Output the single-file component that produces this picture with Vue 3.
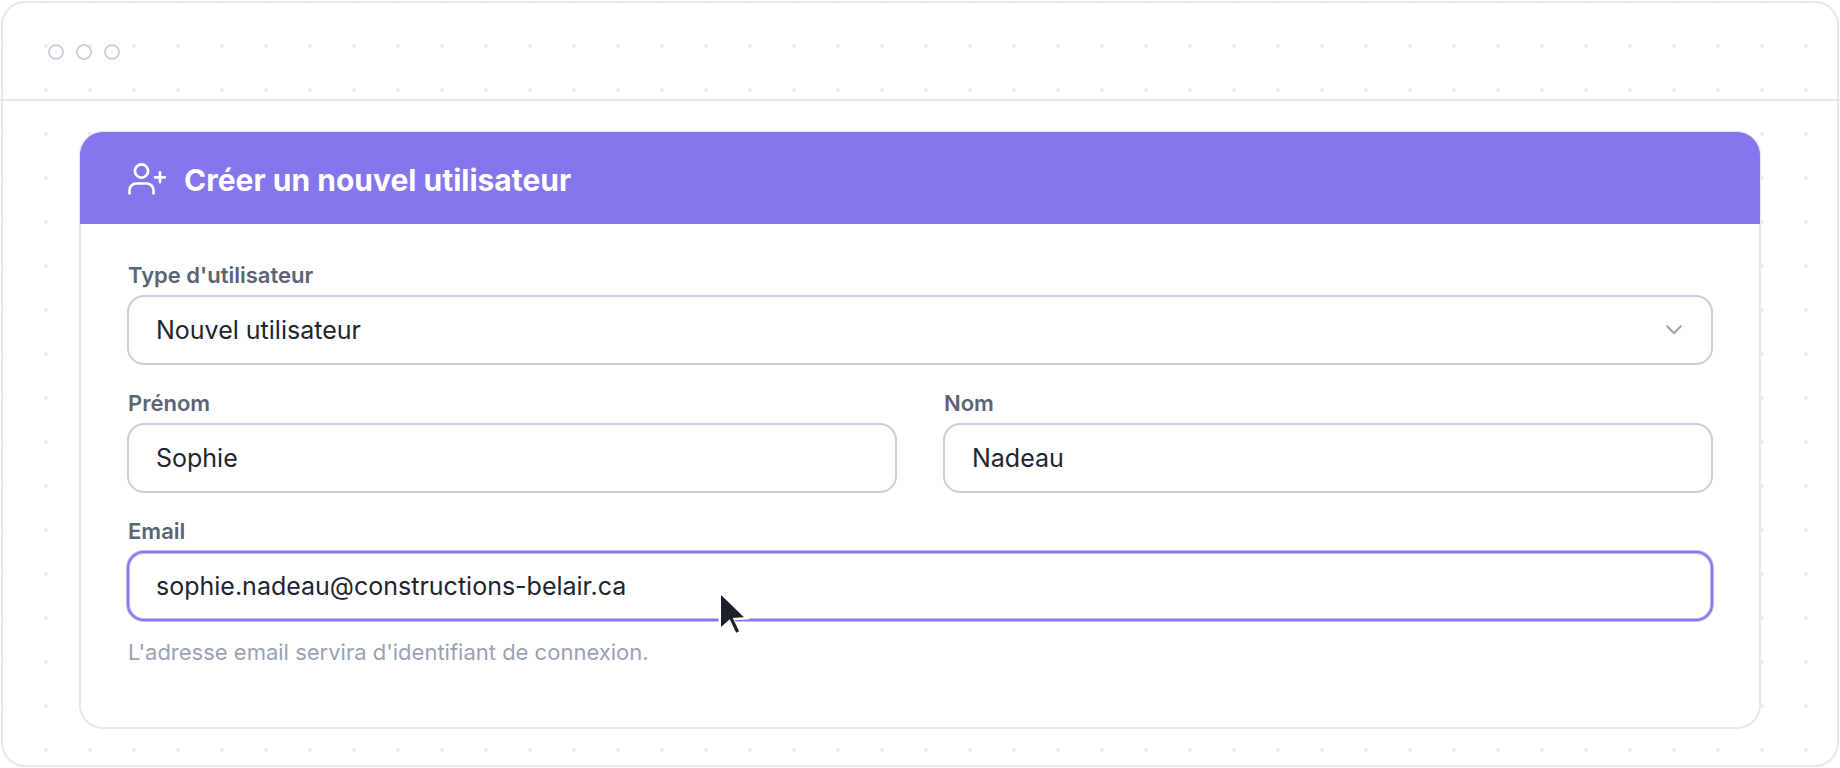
<script setup>
import { ref } from 'vue'

const userType = ref('new')
const firstName = ref('Sophie')
const lastName = ref('Nadeau')
const email = ref('sophie.nadeau@constructions-belair.ca')
</script>

<template>
  <main class="window">
    <header class="titlebar">
      <span class="dot"></span>
      <span class="dot"></span>
      <span class="dot"></span>
    </header>

    <div class="content">
      <section class="card">
        <div class="card-header">
          <svg class="user-icon" viewBox="0 0 40 36" fill="none" aria-hidden="true">
            <circle cx="13.5" cy="11" r="6.6" />
            <path d="M1.5 33.3V30.2a6.7 6.7 0 0 1 6.7-6.7h10.6a6.7 6.7 0 0 1 6.7 6.7v3.1" />
            <path d="M32 12.4v9.8M27.1 17.3h9.8" />
          </svg>
          <h1 class="title">Créer un nouvel utilisateur</h1>
        </div>

        <form class="form" @submit.prevent>
          <div class="field">
            <label class="label" for="user-type">Type d'utilisateur</label>
            <div class="control">
              <select id="user-type" v-model="userType" class="input">
                <option value="new">Nouvel utilisateur</option>
              </select>
              <svg class="chevron" viewBox="0 0 16 10" fill="none" aria-hidden="true">
                <path d="M1.2 1.3 8 8.2l6.8-6.9" />
              </svg>
            </div>
          </div>

          <div class="row">
            <div class="field">
              <label class="label" for="first-name">Prénom</label>
              <input id="first-name" v-model="firstName" class="input" type="text" />
            </div>
            <div class="field">
              <label class="label" for="last-name">Nom</label>
              <input id="last-name" v-model="lastName" class="input" type="text" />
            </div>
          </div>

          <div class="field">
            <label class="label" for="email">Email</label>
            <div class="control">
              <input
                id="email"
                v-model="email"
                class="input input-active"
                type="email"
                aria-describedby="email-hint"
              />
              <svg class="cursor" viewBox="0 0 36 48" aria-hidden="true">
                <g class="cursor-halo">
                  <path d="M4 4v32l9.5-9L27 26.2z" />
                  <path d="M12.6 25.5 21.3 41.5" />
                </g>
                <path class="cursor-tail" d="M13 25 20.6 41" />
                <path class="cursor-head" d="M4 4v32l10.2-9L27 26.2z" />
              </svg>
            </div>
            <p id="email-hint" class="hint">L'adresse email servira d'identifiant de connexion.</p>
          </div>
        </form>
      </section>
    </div>
  </main>
</template>

<style>
body {
  background: #ffffff;
}
</style>

<style scoped>
.window {
  margin: 1px;
  border: 2px solid #e4e8f0;
  border-radius: 24px;
  background: #ffffff radial-gradient(circle at 22px 22px, #ebebf4 1.6px, transparent 2.2px) -23px -23px / 44px 44px;
  background-clip: padding-box;
  font-family: "Inter", "Liberation Sans", sans-serif;
}

.titlebar {
  display: flex;
  gap: 12px;
  margin: 0 -3px;
  padding: 41px 48px 39px;
  border-bottom: 2px solid #e4e8f0;
}

.dot {
  box-sizing: border-box;
  width: 16px;
  height: 16px;
  border: 2px solid #cbd2e0;
  border-radius: 50%;
  background: #ffffff;
}

.content {
  padding: 30px 76px 36px;
}

.card {
  border: 2px solid #e4e8f0;
  border-radius: 24px;
  background: #ffffff;
}

.card-header {
  display: flex;
  align-items: center;
  gap: 16px;
  margin: -1px -1px 0;
  padding: 28px 48px;
  border-radius: 23px 23px 0 0;
  background: #8576ec;
}

.user-icon {
  flex: none;
  width: 40px;
  height: 36px;
  stroke: #ffffff;
  stroke-width: 2.7;
  stroke-linecap: round;
  stroke-linejoin: round;
}

.title {
  margin: 0;
  padding-top: 4px;
  color: #ffffff;
  font-size: 30px;
  font-weight: 700;
  line-height: 32px;
}

.form {
  display: flex;
  flex-direction: column;
  gap: 24px;
  padding: 37px 46px 61px;
}

.row {
  display: grid;
  grid-template-columns: 1fr 1fr;
  gap: 46px;
}

.field {
  display: flex;
  flex-direction: column;
  min-width: 0;
}

.label {
  margin-bottom: 6px;
  padding-left: 1px;
  color: #5a6474;
  font-size: 22px;
  font-weight: 600;
  line-height: 28px;
}

.control {
  position: relative;
  display: flex;
  align-items: center;
}

.input {
  box-sizing: border-box;
  width: 100%;
  height: 70px;
  margin: 0;
  padding: 0 27px;
  border: 2px solid #cbd0de;
  border-radius: 17px;
  outline: none;
  appearance: none;
  background: #ffffff;
  color: #1e2430;
  font-family: inherit;
  font-size: 25px;
  line-height: 32px;
}

.input-active {
  border-color: #8576ec;
  box-shadow: 0 0 0 1px #c2baf5, inset 0 0 0 1px #c2baf5;
}

.chevron {
  position: absolute;
  right: 31px;
  width: 16px;
  height: 10px;
  stroke: #98a1b3;
  stroke-width: 2;
  stroke-linecap: round;
  stroke-linejoin: round;
  pointer-events: none;
}

.cursor {
  position: absolute;
  top: 40px;
  left: 590px;
  width: 36px;
  height: 48px;
  pointer-events: none;
}

.cursor-halo {
  fill: #ffffff;
  stroke: #ffffff;
  stroke-width: 5;
}

.cursor-tail {
  stroke: #1c202c;
  stroke-width: 3.2;
}

.cursor-head {
  fill: #1c202c;
}

.hint {
  margin: 17px 0 0;
  padding-left: 1px;
  color: #9aa2b4;
  font-size: 22px;
  line-height: 28px;
}
</style>
